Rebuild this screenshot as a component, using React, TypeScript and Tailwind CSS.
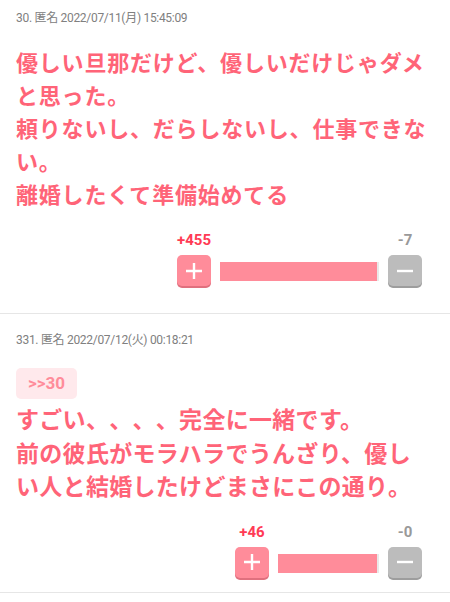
import React from "react";

interface Post {
  no: number;
  date: string;
  anchor?: string;
  lines: string[];
  plus: number;
  minus: number;
  barWidth: number;
  fill: number;
  textClass: string;
  bottomPad: string;
}

const posts: Post[] = [
  {
    no: 30,
    date: "2022/07/11(月) 15:45:09",
    lines: [
      "優しい旦那だけど、優しいだけじゃダメと思った。",
      "頼りないし、だらしないし、仕事できない。",
      "離婚したくて準備始めてる",
    ],
    plus: 455,
    minus: 7,
    barWidth: 159,
    fill: 0.985,
    textClass: "mt-[19px] text-[22px] leading-[33px] tracking-[0.8px]",
    bottomPad: "pb-[23px]",
  },
  {
    no: 331,
    date: "2022/07/12(火) 00:18:21",
    anchor: ">>30",
    lines: [
      "すごい、、、、完全に一緒です。",
      "前の彼氏がモラハラでうんざり、優しい人と結婚したけどまさにこの通り。",
    ],
    plus: 46,
    minus: 0,
    barWidth: 101,
    fill: 0.98,
    textClass: "mt-[3px] text-[23px] leading-[33.5px] tracking-[0.3px]",
    bottomPad: "pb-[14px]",
  },
];

function VoteBox({ post }: { post: Post }) {
  return (
    <div className="flex justify-end pr-[28px]">
      <div className="flex flex-col">
        <div className="flex justify-between text-[15px] font-bold leading-[16px]" style={{ fontFamily: "Roboto, sans-serif" }}>
          <span className="w-[34px] text-center text-[#ff3b55]">+{post.plus}</span>
          <span className="w-[34px] text-center text-[#999]">-{post.minus}</span>
        </div>
        <div className="mt-[7px] flex items-start">
          <button className="flex h-[31px] w-[34px] items-center justify-center rounded-[5px] bg-[#ff8c9a] shadow-[0_2px_0_#e0707e]">
            <svg width="18" height="18" viewBox="0 0 18 18">
              <path d="M9 1v16M1 9h16" stroke="white" strokeWidth="2.4" />
            </svg>
          </button>
          <div
            className="ml-[9px] mt-[7px] h-[19px] bg-[#e9e9e9]"
            style={{ width: post.barWidth }}
          >
            <div className="h-full bg-[#ff8c9a]" style={{ width: `${post.fill * 100}%` }} />
          </div>
          <button className="ml-[9px] flex h-[31px] w-[34px] items-center justify-center rounded-[5px] bg-[#bcbcbc] shadow-[0_2px_0_#9d9d9d]">
            <svg width="18" height="18" viewBox="0 0 18 18">
              <path d="M1 9h16" stroke="white" strokeWidth="2.4" />
            </svg>
          </button>
        </div>
      </div>
    </div>
  );
}

export default function App() {
  return (
    <div className="min-h-[602px] w-[450px] bg-white" style={{ fontFamily: "'Noto Sans CJK JP', sans-serif" }}>
      {posts.map((post, i) => (
        <div key={post.no} className={`border-b border-[#e6e6e6] ${post.bottomPad} ${i === 0 ? "pt-[10px]" : "pt-[18px]"}`}>
          <div
            className="px-4 text-[12px] leading-[16px] tracking-[-0.3px] text-[#808080]"
            style={{ fontFamily: "Roboto, 'Noto Sans CJK JP', sans-serif" }}
          >
            {post.no}. 匿名 {post.date}
          </div>
          {post.anchor && (
            <div className="mt-[20px] px-4">
              <span
                className="inline-block rounded-[5px] bg-[#ffe9ec] px-[12px] text-[17px] font-bold leading-[31px] text-[#ff8c9a]"
                style={{ fontFamily: "Roboto, sans-serif" }}
              >
                {post.anchor}
              </span>
            </div>
          )}
          <div
            className={`${post.textClass} px-4 font-bold text-[#ff6478] [text-spacing-trim:space-all]`}
          >
            {post.lines.map((l) => (
              <p key={l}>{l}</p>
            ))}
          </div>
          <div className={i === 0 ? "mt-[22px] pb-[4px]" : "mt-[21px]"}>
            <VoteBox post={post} />
          </div>
        </div>
      ))}
    </div>
  );
}
